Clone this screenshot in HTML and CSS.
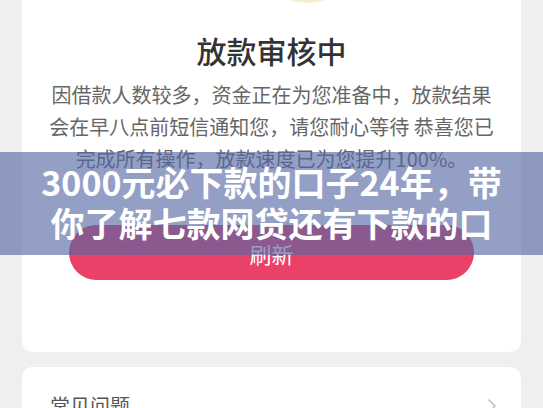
FILE: index.html
```html
<!DOCTYPE html>
<html lang="zh-CN">
<head>
  <meta charset="UTF-8" />
  <meta name="viewport" content="width=device-width, initial-scale=1.0"/>
  <title>放款审核中</title>
  <link rel="stylesheet" href="styles.css">
</head>
<body>

  <div class="page">
    <!-- Status card -->
    <div class="card status">
      <div class="icon-row"><div class="icon"></div></div>
      <h2 class="title">放款审核中</h2>
      <p class="desc">
        因借款人数较多，资金正在为您准备中，放款结果<br>
        会在早八点前短信通知您，请您耐心等待 恭喜您已<br>
        完成所有操作，放款速度已为您提升100%。
      </p>
      <button class="refresh-btn">刷新</button>
    </div>

    <!-- FAQ card -->
    <div class="card faq">
      <div class="faq-head">
        <span>常见问题</span>
        <svg class="chevron" width="10" height="16" viewBox="0 0 10 16">
          <polyline points="2,2 8,8 2,14" fill="none" stroke="#bdbdbd" stroke-width="1.6" stroke-linecap="round" stroke-linejoin="round"/>
        </svg>
      </div>
    </div>
  </div>

  <!-- Article title banner -->
  <div class="banner">
    3000元必下款的口子24年，带<br>
    你了解七款网贷还有下款的口
  </div>

</body>
</html>
```

FILE: styles.css
```css
body {
  font-family: "Noto Sans CJK SC", "Noto Sans", sans-serif;
  margin: 0;
  background-color: #efefef;
  overflow: hidden;
}

.page {
  padding: 0 22px;
}

.card {
  background: #fff;
  border-radius: 10px;
}

.status {
  margin-top: -127px;
  padding: 20px 20px 72px;
  text-align: center;
}

.icon-row {
  display: flex;
  justify-content: center;
  padding-left: 70px;
}

.icon {
  width: 110px;
  height: 110px;
  border-radius: 50%;
  background-color: #f6efcb;
}

.title {
  margin: 26px 0 0;
  font-size: 30px;
  line-height: 42px;
  font-weight: 500;
  color: #333;
}

.desc {
  margin: 8px 0 0;
  font-size: 20px;
  line-height: 32px;
  color: #666;
  white-space: nowrap;
}

.refresh-btn {
  display: block;
  width: 405px;
  height: 55px;
  margin: 50px auto 0;
  border: none;
  border-radius: 28px;
  background-color: #ea4169;
  color: white;
  font-family: inherit;
  font-size: 22px;
  cursor: pointer;
}

.faq {
  margin-top: 15px;
  padding: 25px 24px 40px 28px;
}

.faq-head {
  display: flex;
  justify-content: space-between;
  align-items: center;
  font-size: 20px;
  line-height: 28px;
  color: #555;
}

.banner {
  position: absolute;
  top: 152px;
  left: 0;
  width: 100%;
  height: 103px;
  box-sizing: border-box;
  padding-top: 9px;
  background-color: rgba(85, 103, 165, 0.63);
  color: white;
  font-size: 34px;
  line-height: 41px;
  font-weight: 700;
  text-align: center;
  white-space: nowrap;
}
```
